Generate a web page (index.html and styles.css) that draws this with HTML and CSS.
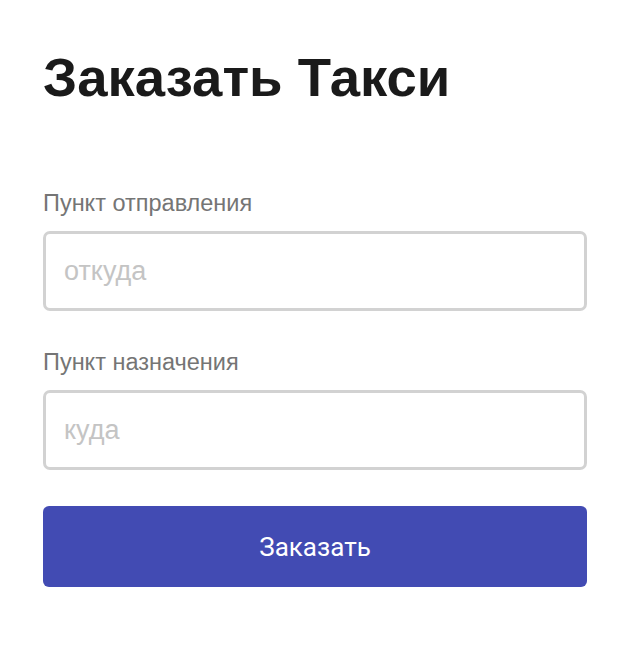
FILE: index.html
```html
<!DOCTYPE html>
<html lang="ru">
<head>
<meta charset="utf-8">
<title>Заказать Такси</title>
<link rel="stylesheet" href="styles.css">
</head>
<body>
<main class="page">
  <h1 class="title">Заказать Такси</h1>
  <form class="form">
    <label class="field">
      <span class="label">Пункт отправления</span>
      <input class="input" type="text" placeholder="откуда">
    </label>
    <label class="field">
      <span class="label">Пункт назначения</span>
      <input class="input" type="text" placeholder="куда">
    </label>
    <button class="submit" type="button">Заказать</button>
  </form>
</main>
</body>
</html>
```
FILE: styles.css
```css
html, body {
  margin: 0;
  padding: 0;
  background: #fff;
}
.page {
  padding: 46px 38px 0 43px;
  font-family: "Liberation Sans", Arial, sans-serif;
}
.title {
  margin: 0;
  font-size: 54.5px;
  font-weight: 700;
  color: #1a1a1a;
  line-height: 64px;
}
.form {
  margin-top: 79px;
  display: flex;
  flex-direction: column;
}
.field {
  display: flex;
  flex-direction: column;
  margin-bottom: 37px;
}
.label {
  font-size: 23.5px;
  color: #757575;
  line-height: 28px;
  margin-bottom: 14px;
}
.input {
  box-sizing: border-box;
  height: 80px;
  border: 3px solid #d2d2d2;
  border-radius: 7px;
  padding: 0 18px;
  font-family: "Liberation Sans", Arial, sans-serif;
  font-size: 27px;
  color: #333;
  outline: none;
}
.input::placeholder {
  color: #c4c4c4;
}
.submit {
  margin-top: -1px;
  height: 81px;
  border: none;
  border-radius: 6px;
  background: #424bb3;
  color: #fff;
  font-family: Roboto, "Liberation Sans", sans-serif;
  font-size: 26px;
  cursor: pointer;
}
```
